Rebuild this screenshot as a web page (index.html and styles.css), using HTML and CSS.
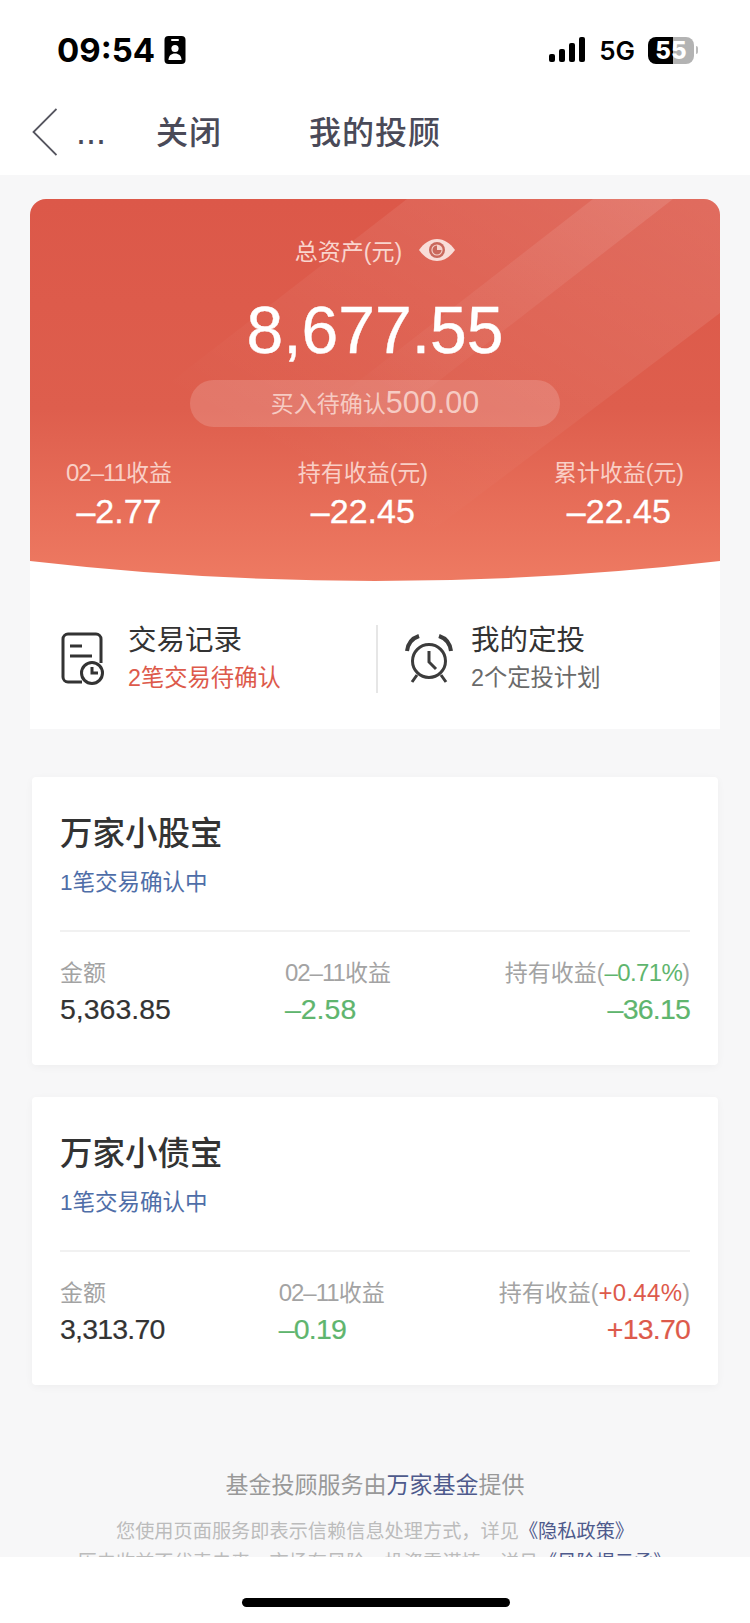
FILE: index.html
```html
<!DOCTYPE html>
<html lang="zh-CN">
  <head>
    <meta charset="UTF-8" />
    <meta name="viewport" content="width=device-width, initial-scale=1.0" />
    <title>我的投顾</title>
    <link rel="stylesheet" href="styles.css">
  </head>
  <body>
    <div class="page">
      <header class="status-bar">
        <div class="status-left">
          <span class="clock">09:54</span>
          <svg class="badge-icon" width="22" height="30" viewBox="0 0 22 30">
            <rect x="0.5" y="1" width="21" height="28" rx="4" fill="#000" />
            <rect x="7" y="4" width="8" height="2" rx="1" fill="#fff" />
            <circle cx="11" cy="13.5" r="3.6" fill="#fff" />
            <path d="M4.5 25c0-4.5 3-6.6 6.5-6.6s6.5 2.1 6.5 6.6z" fill="#fff" />
          </svg>
        </div>
        <div class="status-right">
          <svg class="signal-icon" width="38" height="26" viewBox="0 0 38 26">
            <rect x="0" y="17" width="6" height="8" rx="2" />
            <rect x="10" y="12" width="6" height="13" rx="2" />
            <rect x="20" y="6" width="6" height="19" rx="2" />
            <rect x="30" y="0" width="6" height="25" rx="2" />
          </svg>
          <span class="network">5G</span>
          <div class="battery"><span>55</span></div>
          <span class="battery-tip"></span>
        </div>
      </header>

      <nav class="nav-bar">
        <svg class="back-icon" width="25" height="48" viewBox="0 0 25 48">
          <path d="M24.5 1 1.5 24l23 23" fill="none" stroke="#55555f" stroke-width="1.8" />
        </svg>
        <span class="more">...</span>
        <span class="nav-close">关闭</span>
        <span class="nav-title">我的投顾</span>
      </nav>

      <main class="content">
        <section class="summary">
          <div class="hero">
            <svg class="hero-bands" width="690" height="382" viewBox="0 0 690 382">
              <defs>
                <linearGradient id="wide-band" x1="1" y1="0" x2="0.25" y2="1">
                  <stop offset="0" stop-color="#fff" stop-opacity="0.12" />
                  <stop offset="0.62" stop-color="#fff" stop-opacity="0" />
                </linearGradient>
                <linearGradient id="thin-band" x1="1" y1="0" x2="0" y2="1">
                  <stop offset="0" stop-color="#fff" stop-opacity="0.11" />
                  <stop offset="0.9" stop-color="#fff" stop-opacity="0" />
                </linearGradient>
              </defs>
              <polygon points="377,0 690,0 690,114 150,522 0,292" fill="url(#wide-band)" />
              <polygon points="563,0 643,0 343,233 263,233" fill="url(#thin-band)" />
            </svg>
            <div class="hero-label">
              <span>总资产(元)</span>
              <svg class="eye-icon" width="36" height="22" viewBox="0 0 36 22">
                <path d="M0 11C5 4 11 0 18 0s13 4 18 11c-5 7-11 11-18 11S5 18 0 11z" fill="#f9ddd8" />
                <circle cx="18" cy="11" r="8" fill="#c9685c" />
                <circle cx="18" cy="11" r="5.6" fill="#f6d3cc" />
                <path d="M18 6.5a4.5 4.5 0 1 0 4.5 4.5H18z" fill="#c9685c" />
              </svg>
            </div>
            <div class="hero-amount">8,677.55</div>
            <div class="hero-pending">买入待确认<b>500.00</b></div>
            <div class="hero-stats">
              <div class="hero-stat">
                <div class="hero-stat-label"><span class="date">02–11</span>收益</div>
                <div class="hero-stat-value">–2.77</div>
              </div>
              <div class="hero-stat">
                <div class="hero-stat-label">持有收益(元)</div>
                <div class="hero-stat-value">–22.45</div>
              </div>
              <div class="hero-stat">
                <div class="hero-stat-label">累计收益(元)</div>
                <div class="hero-stat-value">–22.45</div>
              </div>
            </div>
          </div>

          <div class="shortcuts">
            <div class="shortcut shortcut-records">
              <svg width="48" height="54" viewBox="0 0 48 54" fill="none" stroke="#333" stroke-width="3">
                <path d="M24 50H10a5 5 0 0 1-5-5V7a5 5 0 0 1 5-5h28a5 5 0 0 1 5 5v24" />
                <path d="M12 14h12M12 24h22" />
                <circle cx="34" cy="41" r="10.5" />
                <path d="M34 35v6h6" />
              </svg>
              <div class="shortcut-text">
                <div class="shortcut-title">交易记录</div>
                <div class="shortcut-sub is-red">2笔交易待确认</div>
              </div>
            </div>
            <div class="shortcut shortcut-plans">
              <svg width="50" height="54" viewBox="0 0 50 54" fill="none" stroke="#3c3c3c" stroke-width="3">
                <circle cx="25" cy="29" r="16.5" />
                <path d="M25 19v11l7 7" />
                <path d="M3 19C4 11 9 6 15 4M47 19c-1-8-6-13-12-15" stroke-width="4" />
                <path d="M13 43l-5 7M37 43l5 7" />
              </svg>
              <div class="shortcut-text">
                <div class="shortcut-title">我的定投</div>
                <div class="shortcut-sub">2个定投计划</div>
              </div>
            </div>
          </div>
        </section>

        <section class="fund-card">
          <h2 class="fund-name">万家小股宝</h2>
          <div class="fund-note">1笔交易确认中</div>
          <div class="fund-stats">
            <div class="fund-stat">
              <div class="fund-label">金额</div>
              <div class="fund-value">5,363.85</div>
            </div>
            <div class="fund-stat">
              <div class="fund-label"><span class="date">02–11</span>收益</div>
              <div class="fund-value is-green">–2.58</div>
            </div>
            <div class="fund-stat is-right">
              <div class="fund-label">持有收益(<span class="rate is-green">–0.71%</span>)</div>
              <div class="fund-value is-green tight">–36.15</div>
            </div>
          </div>
        </section>

        <section class="fund-card">
          <h2 class="fund-name">万家小债宝</h2>
          <div class="fund-note">1笔交易确认中</div>
          <div class="fund-stats">
            <div class="fund-stat">
              <div class="fund-label">金额</div>
              <div class="fund-value tight">3,313.70</div>
            </div>
            <div class="fund-stat">
              <div class="fund-label"><span class="date">02–11</span>收益</div>
              <div class="fund-value is-green tight">–0.19</div>
            </div>
            <div class="fund-stat is-right">
              <div class="fund-label">持有收益(<span class="rate is-red">+0.44%</span>)</div>
              <div class="fund-value is-red tight">+13.70</div>
            </div>
          </div>
        </section>

        <footer class="notes">
          <div class="notes-provider">基金投顾服务由<span class="provider-link">万家基金</span>提供</div>
          <div class="notes-line">您使用页面服务即表示信赖信息处理方式，详见<span class="notes-link">《隐私政策》</span></div>
          <div class="notes-line">历史收益不代表未来，市场有风险，投资需谨慎，详见<span class="notes-link">《风险揭示函》</span></div>
        </footer>
      </main>

      <div class="home-area"><span class="home-bar"></span></div>
    </div>
  </body>
</html>
```

FILE: styles.css
```css
html,
body {
  margin: 0;
  overflow: hidden;
}

body {
  font-family: "Liberation Sans", "Noto Sans CJK SC", sans-serif;
  background-color: #f7f7f8;
}

.page {
  position: relative;
  height: 1623px;
  overflow: hidden;
}

/* status bar */
.status-bar {
  height: 98px;
  padding: 0 52px 0 57px;
  display: flex;
  align-items: center;
  justify-content: space-between;
  background-color: #fff;
}

.status-left {
  padding-top: 2px;
  display: flex;
  align-items: center;
  gap: 9px;
}

.clock {
  font-family: Inter, sans-serif;
  font-size: 33px;
  font-weight: 700;
  color: #000;
}

.status-right {
  padding-top: 2px;
  display: flex;
  align-items: center;
}

.network {
  margin: 0 13px 0 12px;
  font-family: Inter, sans-serif;
  font-size: 26px;
  font-weight: 600;
  color: #000;
}

.battery {
  width: 46px;
  height: 27px;
  border-radius: 8px;
  display: flex;
  align-items: center;
  justify-content: center;
  background: linear-gradient(90deg, #000 0 54%, #b3b3b3 54%);
}

.battery span {
  font-family: Inter, sans-serif;
  font-size: 24px;
  font-weight: 800;
  color: #fff;
}

.battery-tip {
  width: 2px;
  height: 8px;
  margin-left: 2px;
  border-radius: 0 2px 2px 0;
  background-color: #bbb;
}

/* nav */
.nav-bar {
  height: 63px;
  padding: 0 0 14px 32px;
  display: flex;
  align-items: center;
  background-color: #fff;
  color: #4a4a58;
}

.back-icon {
  margin-top: 4px;
}

.more {
  width: 80px;
  margin-left: 19px;
  padding-top: 4px;
  font-size: 36px;
  line-height: 32px;
}

.nav-close,
.nav-title {
  font-size: 32px;
  font-weight: 500;
  letter-spacing: 1px;
}

.nav-title {
  margin-left: 87px;
}

/* summary */
.content {
  padding: 24px 30px 0;
}

.summary {
  background-color: #fff;
  border-radius: 16px 16px 0 0;
  overflow: hidden;
}

.hero {
  position: relative;
  height: 382px;
  padding-top: 36px;
  box-sizing: border-box;
  text-align: center;
  color: #fff;
  background: linear-gradient(180deg, #dc5849 0%, #de5e4d 55%, #ee7a62 100%);
  clip-path: path("M0 0H690V362Q345 402 0 362Z");
}

.hero-bands {
  position: absolute;
  top: 0;
  left: 0;
}

.hero > div {
  position: relative;
}

.hero-label {
  height: 30px;
  display: flex;
  align-items: center;
  justify-content: center;
  gap: 17px;
  font-size: 23px;
  color: #f9d5ce;
}

.hero-amount {
  margin-top: 27px;
  font-size: 66px;
  line-height: 76px;
  -webkit-text-stroke: 0.4px #fff;
}

.hero-pending {
  width: 370px;
  height: 47px;
  margin: 12px auto 0;
  border-radius: 24px;
  line-height: 45px;
  font-size: 23px;
  color: #f6cbc3;
  background-color: rgba(255, 255, 255, 0.16);
}

.hero-pending b {
  font-size: 30.5px;
  font-weight: 400;
  vertical-align: -1px;
}

.hero-stats {
  margin-top: 30px;
  padding: 0 36px;
  display: flex;
  justify-content: space-between;
}

.hero-stat-label {
  font-size: 23px;
  line-height: 32px;
  color: #f9cfc6;
}

.hero-stat-value {
  margin-top: 2px;
  font-size: 34px;
  line-height: 40px;
  -webkit-text-stroke: 0.3px #fff;
}

/* digits in the labels run a bit bigger than the chinese, the 1s sit tight */
.date {
  font-size: 24px;
  letter-spacing: -1px;
}

.rate {
  font-size: 24px;
}

.rate.is-green {
  letter-spacing: -0.6px;
}

.rate.is-red {
  letter-spacing: 0.3px;
}

/* shortcuts */
.shortcuts {
  height: 148px;
  padding-top: 8px;
  box-sizing: border-box;
  display: flex;
  align-items: center;
}

.shortcut {
  height: 68px;
  display: flex;
  align-items: center;
  box-sizing: border-box;
}

.shortcut-records {
  width: 346px;
  padding-left: 28px;
  gap: 22px;
}

.shortcut-plans {
  flex: 1;
  padding-left: 26px;
  gap: 17px;
  border-left: 2px solid #e6e6e6;
}

.shortcut-text {
  margin-top: -4px;
}

.shortcut-title {
  font-size: 28.5px;
  line-height: 38px;
  color: #333;
}

.shortcut-sub {
  margin-top: 3px;
  font-size: 23.3px;
  line-height: 32px;
  color: #6a6a6a;
}

/* fund cards */
.fund-card {
  height: 288px;
  margin: 48px 2px 0;
  padding: 35px 28px 0;
  box-sizing: border-box;
  border-radius: 4px;
  background-color: #fff;
  box-shadow: 0 2px 8px rgba(0, 0, 0, 0.04);
}

.fund-card + .fund-card {
  margin-top: 32px;
}

.fund-name {
  margin: 0;
  font-size: 32.5px;
  font-weight: 500;
  line-height: 44px;
  color: #333;
}

.fund-note {
  margin-top: 11px;
  padding-bottom: 31px;
  border-bottom: 2px solid #f1f1f1;
  font-size: 22.5px;
  line-height: 32px;
  color: #4f6ea8;
}

.fund-stats {
  margin-top: 25px;
  display: flex;
  justify-content: space-between;
}

.fund-stat.is-right {
  text-align: right;
}

.fund-label {
  font-size: 23px;
  line-height: 32px;
  color: #a3a3a3;
}

.fund-value {
  font-size: 28.5px;
  line-height: 40px;
  color: #333;
  -webkit-text-stroke: 0.2px currentColor;
}

.fund-value.tight {
  letter-spacing: -0.8px;
}

.is-green {
  color: #5fb56e;
}

.is-red {
  color: #dd5a4b;
}

/* footer text */
.notes {
  margin-top: 83px;
  text-align: center;
}

.notes-provider {
  font-size: 23px;
  line-height: 34px;
  color: #999;
}

.provider-link {
  color: #4e5a8c;
}

.notes-line {
  font-size: 19.2px;
  line-height: 31px;
  color: #bcbcbc;
  white-space: nowrap;
}

.notes-provider + .notes-line {
  margin-top: 14px;
}

.notes-link {
  color: #4e5a8c;
}

/* home indicator, sits over the scrolled content */
.home-area {
  position: absolute;
  left: 0;
  right: 0;
  bottom: 0;
  height: 66px;
  background-color: #fff;
}

.home-bar {
  position: absolute;
  left: 242px;
  top: 41px;
  width: 268px;
  height: 9px;
  border-radius: 5px;
  background-color: #000;
}
```
